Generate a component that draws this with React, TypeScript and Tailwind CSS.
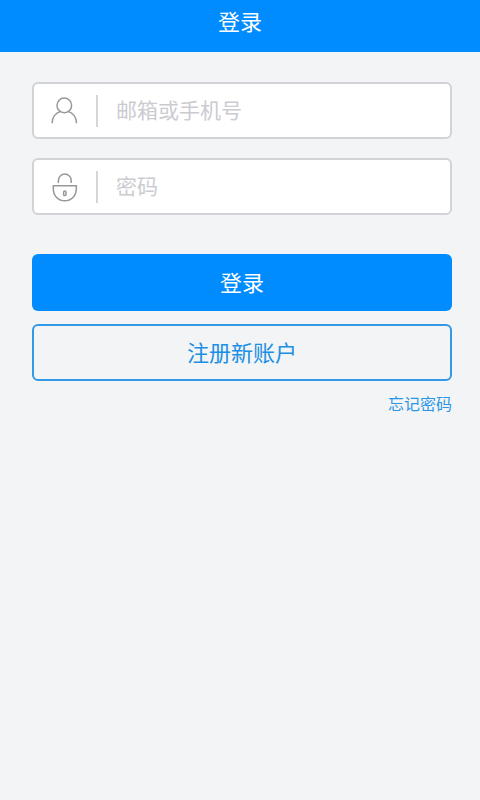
import { useState, type ReactNode } from "react";

export default function App() {
  const [account, setAccount] = useState("");
  const [password, setPassword] = useState("");

  return (
    <div
      lang="zh-CN"
      className="min-h-screen bg-[#f2f4f6] font-['Noto_Sans_CJK_SC',sans-serif]"
    >
      <header className="flex h-[52px] justify-center bg-[#008cff] pt-1">
        <h1 className="text-[22px] leading-8 text-white">登录</h1>
      </header>

      <form
        className="flex flex-col px-7 pt-[30px] pl-8"
        onSubmit={(event) => event.preventDefault()}
      >
        <div className="flex flex-col gap-[19px]">
          <Field
            id="account"
            label="邮箱或手机号"
            type="text"
            value={account}
            onChange={setAccount}
            icon={<UserIcon />}
          />
          <Field
            id="password"
            label="密码"
            type="password"
            value={password}
            onChange={setPassword}
            icon={<LockIcon />}
          />
        </div>

        <button
          type="submit"
          className="mt-[39px] h-[57px] rounded-md bg-[#008cff] pb-1 text-[22px] leading-8 text-white"
        >
          登录
        </button>
        <button
          type="button"
          className="mt-[13px] h-[57px] rounded-md border-2 border-[#3399e6] pb-1 text-[22px] leading-8 text-[#1a8fe3]"
        >
          注册新账户
        </button>
        <a href="#" className="mt-2.5 self-end text-base text-[#2b97e4]">
          忘记密码
        </a>
      </form>
    </div>
  );
}

function Field({
  id,
  label,
  type,
  value,
  onChange,
  icon,
}: {
  id: string;
  label: string;
  type: string;
  value: string;
  onChange: (value: string) => void;
  icon: ReactNode;
}) {
  return (
    <div className="flex h-[57px] items-center rounded-md border-2 border-[#d2d3d7] bg-white">
      <label
        htmlFor={id}
        aria-label={label}
        className="flex h-8 w-16 shrink-0 items-center justify-center border-r-2 border-[#d6d6da] pr-0.5"
      >
        {icon}
      </label>
      <input
        id={id}
        type={type}
        value={value}
        placeholder={label}
        onChange={(event) => onChange(event.target.value)}
        className="h-full min-w-0 flex-1 px-[18px] pb-1 text-[21px] text-gray-700 outline-none placeholder:text-[#cbcbd1]"
      />
    </div>
  );
}

function UserIcon() {
  return (
    <svg
      width="32"
      height="32"
      viewBox="0 0 32 32"
      fill="none"
      stroke="#98989b"
      strokeWidth="1.5"
      aria-hidden="true"
    >
      <circle cx="16.3" cy="10.4" r="7.3" />
      <path d="M4.1 28.2c0-5.5 3.3-10.3 8.6-12M28.5 28.2c0-5.5-3.3-10.3-8.6-12" />
    </svg>
  );
}

function LockIcon() {
  return (
    <svg
      width="32"
      height="32"
      viewBox="0 0 32 32"
      fill="none"
      stroke="#98989b"
      strokeWidth="1.5"
      aria-hidden="true"
    >
      <path d="M10.4 12V9.5a6.4 6.4 0 0 1 12.8 0V12" />
      <path d="M5.3 14.8H28.3V17.5C28.3 25 23.3 29.8 16.8 29.8S5.3 25 5.3 17.5Z" />
      <rect x="15.6" y="20" width="2.4" height="4.6" rx="1.2" />
    </svg>
  );
}
